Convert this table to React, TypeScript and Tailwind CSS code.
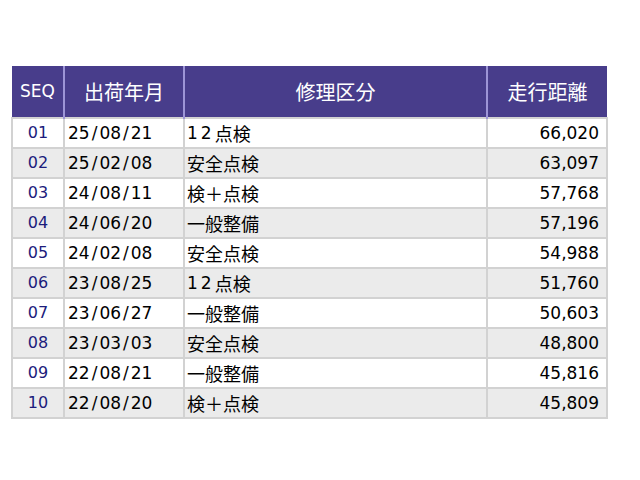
const rows = [
  ["01", "25/08/21", "12", "点検", "66,020"],
  ["02", "25/02/08", "", "安全点検", "63,097"],
  ["03", "24/08/11", "", "検＋点検", "57,768"],
  ["04", "24/06/20", "", "一般整備", "57,196"],
  ["05", "24/02/08", "", "安全点検", "54,988"],
  ["06", "23/08/25", "12", "点検", "51,760"],
  ["07", "23/06/27", "", "一般整備", "50,603"],
  ["08", "23/03/03", "", "安全点検", "48,800"],
  ["09", "22/08/21", "", "一般整備", "45,816"],
  ["10", "22/08/20", "", "検＋点検", "45,809"],
];

// slashes in the date column are drawn wide, as in the original font
function DateText({ value }: { value: string }) {
  const parts = value.split("/");
  return (
    <>
      {parts.map((p, i) => (
        <span key={i}>
          {i > 0 && <span className="mx-[2px]">/</span>}
          {p}
        </span>
      ))}
    </>
  );
}

export default function App() {
  return (
    <div className="w-[640px] h-[480px] bg-white pt-[66px] pl-[11px] font-['DejaVu_Sans','Noto_Sans_CJK_JP',sans-serif]">
      <table className="w-[595px] border-collapse table-fixed">
        <colgroup>
          <col className="w-[52px]" />
          <col className="w-[120px]" />
          <col className="w-[303px]" />
          <col className="w-[120px]" />
        </colgroup>
        <thead>
          <tr className="h-[52px] bg-[#483d8b] text-white">
            <th className="font-normal text-[17px] border-r-2 border-[#9d95d6]">SEQ</th>
            <th className="font-normal text-[20px] border-r-2 border-[#9d95d6] font-['Noto_Sans_CJK_JP',sans-serif]">出荷年月</th>
            <th className="font-normal text-[20px] border-r-2 border-[#9d95d6] font-['Noto_Sans_CJK_JP',sans-serif]">修理区分</th>
            <th className="font-normal text-[20px] font-['Noto_Sans_CJK_JP',sans-serif]">走行距離</th>
          </tr>
        </thead>
        <tbody className="border-t-2 border-white">
          {rows.map((r, i) => (
            <tr key={r[0]} className={`${i % 2 === 0 ? "bg-white" : "bg-[#ebebeb]"}`}>
              <td className="p-0 border-2 border-[#d2d2d2]">
                <div className="h-[28px] flex items-center justify-center text-[16px] leading-none text-[#1c1c7c]">{r[0]}</div>
              </td>
              <td className="p-0 border-2 border-[#d2d2d2]">
                <div className="h-[28px] flex items-center pl-[3px] text-[17px] leading-none text-black">
                  <DateText value={r[1]} />
                </div>
              </td>
              <td className="p-0 border-2 border-[#d2d2d2]">
                <div className="h-[28px] flex items-center pl-[2px] text-[18px] leading-none text-black">
                  {r[2] && <span className="tracking-[3px] text-[17px]">{r[2]}</span>}
                  <span className="font-['Noto_Sans_CJK_JP',sans-serif]">{r[3]}</span>
                </div>
              </td>
              <td className="p-0 border-2 border-[#d2d2d2]">
                <div className="h-[28px] flex items-center justify-end pr-[7px] text-[17px] leading-none text-black">{r[4]}</div>
              </td>
            </tr>
          ))}
        </tbody>
      </table>
    </div>
  );
}
